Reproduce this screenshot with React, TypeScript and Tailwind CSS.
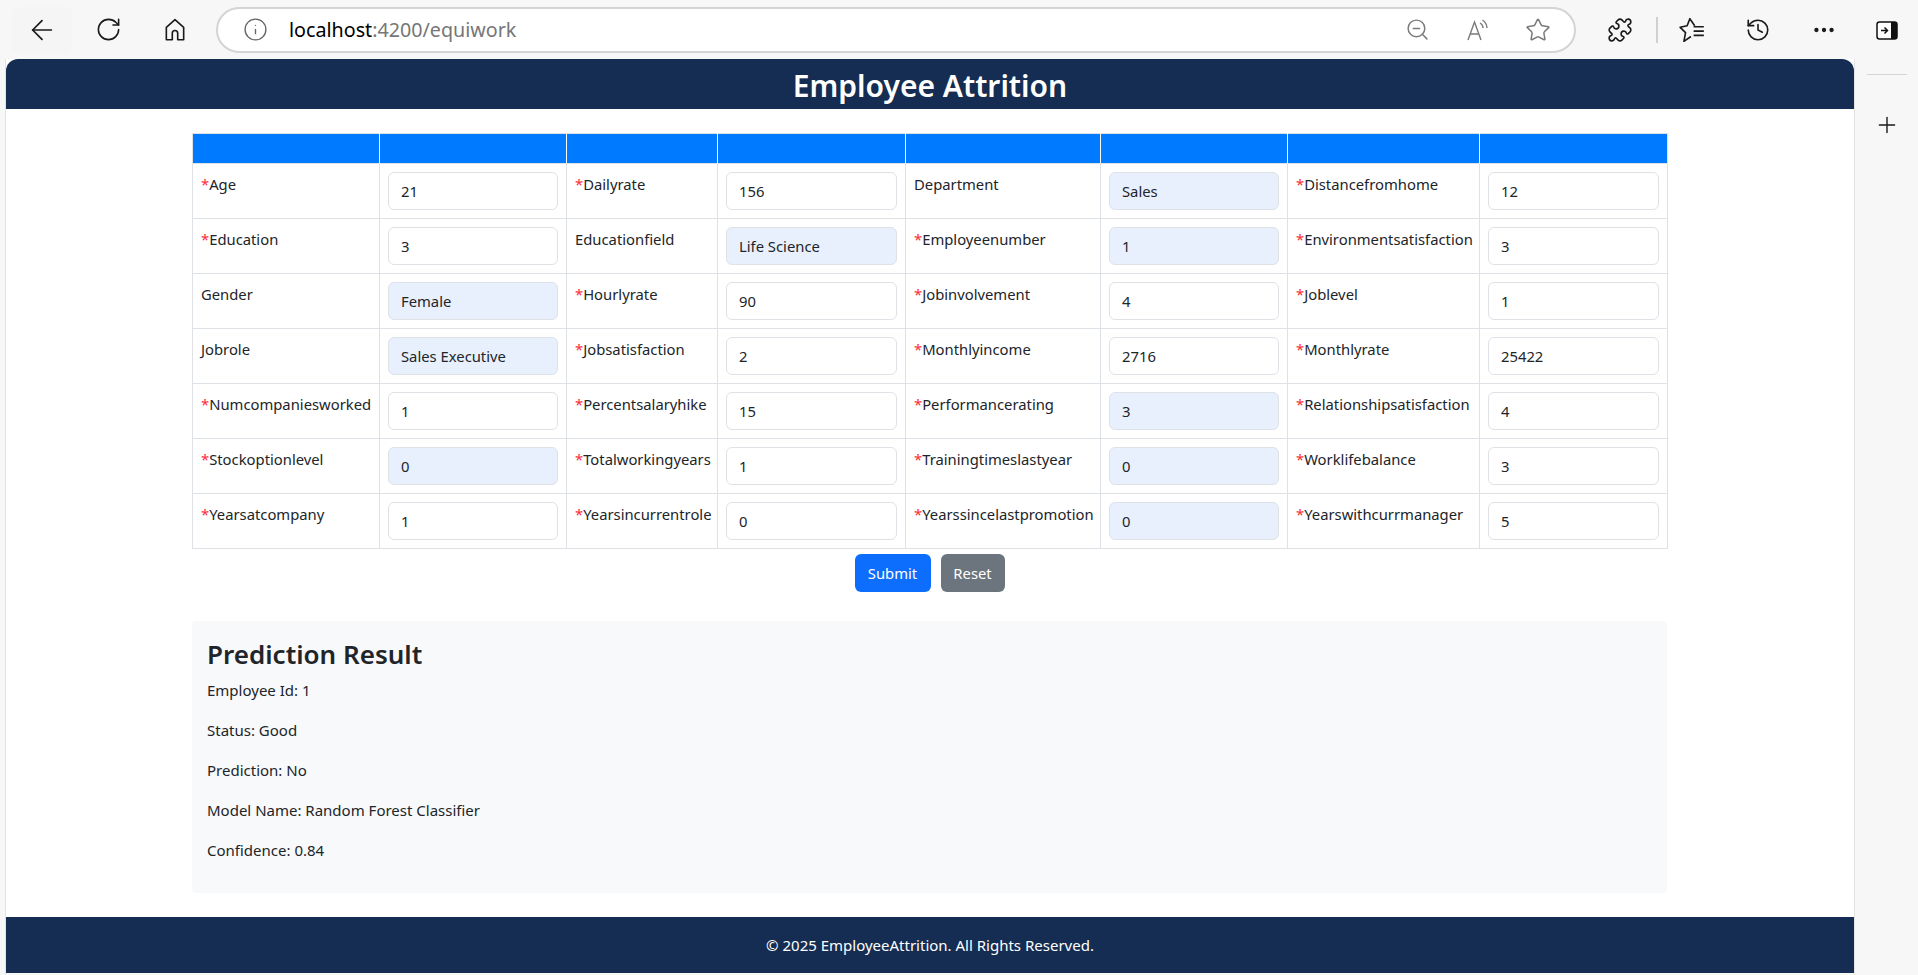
import { ArrowLeft, RotateCw, Info, ZoomOut, Star, Puzzle, History, MoreHorizontal, Plus } from 'lucide-react'

type Field = { label: string; value: string; required: boolean; filled?: boolean }

const rows: Field[][] = [
  [
    { label: 'Age', value: '21', required: true },
    { label: 'Dailyrate', value: '156', required: true },
    { label: 'Department', value: 'Sales', required: false, filled: true },
    { label: 'Distancefromhome', value: '12', required: true },
  ],
  [
    { label: 'Education', value: '3', required: true },
    { label: 'Educationfield', value: 'Life Science', required: false, filled: true },
    { label: 'Employeenumber', value: '1', required: true, filled: true },
    { label: 'Environmentsatisfaction', value: '3', required: true },
  ],
  [
    { label: 'Gender', value: 'Female', required: false, filled: true },
    { label: 'Hourlyrate', value: '90', required: true },
    { label: 'Jobinvolvement', value: '4', required: true },
    { label: 'Joblevel', value: '1', required: true },
  ],
  [
    { label: 'Jobrole', value: 'Sales Executive', required: false, filled: true },
    { label: 'Jobsatisfaction', value: '2', required: true },
    { label: 'Monthlyincome', value: '2716', required: true },
    { label: 'Monthlyrate', value: '25422', required: true },
  ],
  [
    { label: 'Numcompaniesworked', value: '1', required: true },
    { label: 'Percentsalaryhike', value: '15', required: true },
    { label: 'Performancerating', value: '3', required: true, filled: true },
    { label: 'Relationshipsatisfaction', value: '4', required: true },
  ],
  [
    { label: 'Stockoptionlevel', value: '0', required: true, filled: true },
    { label: 'Totalworkingyears', value: '1', required: true },
    { label: 'Trainingtimeslastyear', value: '0', required: true, filled: true },
    { label: 'Worklifebalance', value: '3', required: true },
  ],
  [
    { label: 'Yearsatcompany', value: '1', required: true },
    { label: 'Yearsincurrentrole', value: '0', required: true },
    { label: 'Yearssincelastpromotion', value: '0', required: true, filled: true },
    { label: 'Yearswithcurrmanager', value: '5', required: true },
  ],
]

const results = [
  'Employee Id: 1',
  'Status: Good',
  'Prediction: No',
  'Model Name: Random Forest Classifier',
  'Confidence: 0.84',
]

function HomeIcon() {
  return (
    <svg width="26" height="26" viewBox="0 0 24 24" fill="none" stroke="#1a1a1a" strokeWidth="1.5" strokeLinejoin="round">
      <path d="M12 2.500 4 9.500V21H9.500V15a2.500 2.500 0 0 1 5 0V21H20V9.500Z" />
    </svg>
  )
}

function ReadAloudIcon() {
  return (
    <svg width="26" height="26" viewBox="0 0 26 26" fill="none" stroke="#7a7a7a" strokeWidth="1.4">
      <path d="M3 23 9.500 5 16 23M5.200 17H13.800" />
      <path d="M15 6a6 6 0 0 1 3 5M17.500 3a10 10 0 0 1 4.500 8" />
    </svg>
  )
}

function FavoritesIcon() {
  return (
    <svg width="28" height="28" viewBox="0 0 26 26" fill="none" stroke="#1a1a1a" strokeWidth="1.5" strokeLinejoin="round">
      <path d="M15.500 9 11 2.500 8.500 9 2 10.500l5 5L5.500 23.500 12 19" />
      <path d="M14.500 10H24M14.500 14H24M14.500 18H24" />
    </svg>
  )
}

function SidebarIcon() {
  return (
    <svg width="24" height="24" viewBox="0 0 24 24">
      <rect x="2" y="4" width="20" height="17" rx="2.500" fill="#fff" stroke="#111" strokeWidth="1.500" />
      <path d="M16 4h3.500A2.500 2.500 0 0 1 22 6.500v12a2.500 2.500 0 0 1-2.500 2.500H16Z" fill="#111" />
      <path d="M6 12.500h6M9.500 9.500l3 3-3 3" fill="none" stroke="#111" strokeWidth="1.500" />
    </svg>
  )
}

function FieldCells({ field }: { field: Field }) {
  return (
    <>
      <td className="border border-[#dee2e6] p-2 align-top text-[14.8px] leading-[24px] text-[#212529]">
        {field.required && <span className="text-red-500">*</span>}
        {field.label}
      </td>
      <td className="border border-[#dee2e6] p-2 align-top">
        <input
          readOnly
          value={field.value}
          className={`block h-[38px] w-full rounded-md border border-[#dee2e6] px-[12px] text-[14.8px] text-[#212529] outline-none ${
            field.filled ? 'bg-[#e8f0fe]' : 'bg-white'
          }`}
        />
      </td>
    </>
  )
}

export default function App() {
  return (
    <div className="flex h-[975px] w-[1918px] flex-col overflow-hidden bg-[#f7f7f7] font-['Noto_Sans',sans-serif]">
      {/* Browser toolbar */}
      <div className="flex h-[59px] shrink-0 items-center">
        <div className="ml-[12px] flex h-[46px] w-[60px] items-center justify-center rounded-md bg-[#f5f5f5]">
          <ArrowLeft size={32} strokeWidth={1.3} color="#1a1a1a" />
        </div>
        <div className="ml-[3px] flex w-[66px] justify-center">
          <RotateCw size={27} strokeWidth={1.4} color="#1a1a1a" />
        </div>
        <div className="ml-[1px] flex w-[66px] justify-center">
          <HomeIcon />
        </div>
        <div className="ml-[8px] flex h-[46px] w-[1360px] items-center rounded-full border-2 border-[#d4d4d4] bg-white pl-[25px] pr-[23px]">
          <Info size={25} strokeWidth={1.3} color="#666" />
          <span className="ml-[21px] text-[19.7px] text-black">
            localhost<span className="text-[#767676]">:4200/equiwork</span>
          </span>
          <div className="ml-auto flex items-center">
            <ZoomOut size={25} strokeWidth={1.4} color="#7a7a7a" />
            <div className="ml-[35px]">
              <ReadAloudIcon />
            </div>
            <Star size={26} strokeWidth={1.4} color="#7a7a7a" className="ml-[34px]" />
          </div>
        </div>
        <div className="ml-[30px] flex w-[28px] justify-center">
          <Puzzle size={26} strokeWidth={1.5} color="#1a1a1a" />
        </div>
        <div className="ml-[22px] h-[26px] w-[2px] bg-[#d0d0d0]" />
        <div className="ml-[20px] flex w-[28px] justify-center">
          <FavoritesIcon />
        </div>
        <div className="ml-[38px] flex w-[28px] justify-center">
          <History size={26} strokeWidth={1.5} color="#1a1a1a" />
        </div>
        <div className="ml-[38px] flex w-[28px] justify-center">
          <MoreHorizontal size={26} strokeWidth={2} color="#1a1a1a" />
        </div>
        <div className="ml-[35px] flex w-[28px] justify-center">
          <SidebarIcon />
        </div>
      </div>

      <div className="flex min-h-0 flex-1">
        <div className="w-[6px] shrink-0 border-r border-[#e3e3e3]" />

        {/* Page */}
        <div className="flex w-[1848px] shrink-0 flex-col bg-white">
          <header className="flex h-[50px] shrink-0 items-center justify-center rounded-t-[12px] bg-[#152d52] pt-[3px]">
            <h1 className="text-[30px] font-semibold leading-none text-white">Employee Attrition</h1>
          </header>

          <main className="flex-1">
            <div className="ml-[186px] mt-[24px] w-[1475px]">
              <table className="w-full table-fixed border-collapse">
                <colgroup>
                  <col className="w-[187px]" />
                  <col className="w-[187px]" />
                  <col className="w-[151px]" />
                  <col className="w-[188px]" />
                  <col className="w-[195px]" />
                  <col className="w-[187px]" />
                  <col className="w-[192px]" />
                  <col className="w-[188px]" />
                </colgroup>
                <thead>
                  <tr className="h-[30px] bg-[#007bff]">
                    {Array.from({ length: 8 }).map((_, i) => (
                      <th key={i} className="border border-[#dee2e6] border-x-white first:border-l-[#dee2e6] last:border-r-[#dee2e6]" />
                    ))}
                  </tr>
                </thead>
                <tbody>
                  {rows.map((row, i) => (
                    <tr key={i}>
                      {row.map((field) => (
                        <FieldCells key={field.label} field={field} />
                      ))}
                    </tr>
                  ))}
                </tbody>
              </table>

              <div className="mt-[5px] flex justify-center gap-[10px]">
                <button className="h-[38px] w-[76px] rounded-md bg-[#0d6efd] text-[14.8px] text-white">Submit</button>
                <button className="h-[38px] w-[64px] rounded-md bg-[#6c757d] text-[14.8px] text-white">Reset</button>
              </div>

              <section className="mt-[29px] h-[272px] rounded bg-[#f8f9fa] px-[15px] py-[15px] text-[15px] text-[#212529]">
                <h3 className="mb-[7px] pt-[1px] text-[26px] font-semibold leading-[34px]">Prediction Result</h3>
                {results.map((line) => (
                  <p key={line} className="mb-[16px] leading-[24px]">
                    {line}
                  </p>
                ))}
              </section>
            </div>
          </main>

          <footer className="flex h-[56px] shrink-0 items-center justify-center bg-[#152d52] text-[15px] text-white">
            © 2025 EmployeeAttrition. All Rights Reserved.
          </footer>
          <div className="h-[2px] shrink-0 bg-[#f7f7f7]" />
        </div>

        {/* Edge sidebar */}
        <div className="flex flex-1 flex-col items-center border-l border-[#e3e3e3]">
          <div className="mt-[15px] h-[1px] w-[40px] bg-[#d6d6d6]" />
          <Plus size={26} strokeWidth={1.3} color="#1a1a1a" className="mt-[37px]" />
        </div>
      </div>
    </div>
  )
}
